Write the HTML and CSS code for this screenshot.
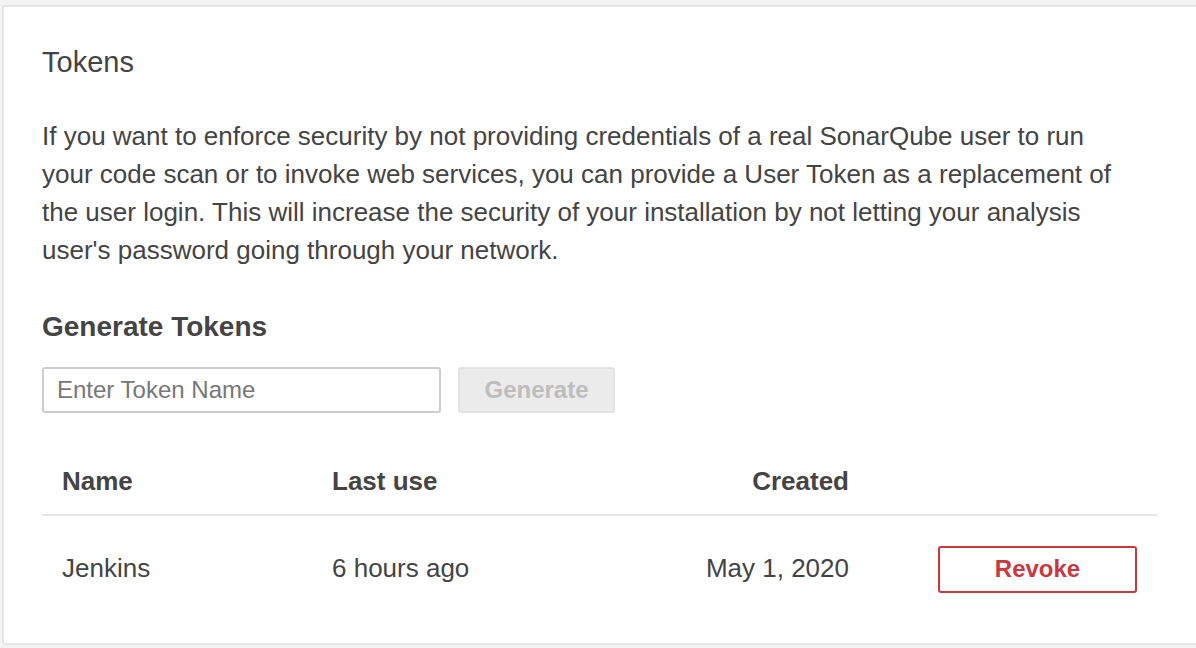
FILE: index.html
```html
<!DOCTYPE html>
<html lang="en">
<head>
<meta charset="utf-8">
<title>Tokens</title>
<link rel="stylesheet" href="styles.css">
</head>
<body>
<div class="card">
  <h2 class="title">Tokens</h2>
  <p class="intro">If you want to enforce security by not providing credentials of a real SonarQube user to run your code scan or to invoke web services, you can provide a User Token as a replacement of the user login. This will increase the security of your installation by not letting your analysis user's password going through your network.</p>
  <h3 class="subtitle">Generate Tokens</h3>
  <form class="gen-form">
    <input class="token-input" type="text" placeholder="Enter Token Name">
    <button class="btn-generate" type="button" disabled>Generate</button>
  </form>
  <table class="tokens">
    <colgroup>
      <col class="c-name">
      <col class="c-last">
      <col class="c-created">
      <col class="c-action">
    </colgroup>
    <thead>
      <tr>
        <th>Name</th>
        <th>Last use</th>
        <th class="right">Created</th>
        <th></th>
      </tr>
    </thead>
    <tbody>
      <tr>
        <td>Jenkins</td>
        <td>6 hours ago</td>
        <td class="right">May 1, 2020</td>
        <td class="right"><button class="btn-revoke" type="button">Revoke</button></td>
      </tr>
    </tbody>
  </table>
</div>
</body>
</html>
```
FILE: styles.css
```css
html {
  background: #f3f3f3;
  overflow: hidden;
}
body {
  margin: 0;
  font-family: "Liberation Sans", Arial, sans-serif;
  color: #444;
}
.card {
  margin: 5px 0 0 2px;
  width: 1240px;
  box-sizing: border-box;
  background: #fff;
  border: 2px solid #e6e6e6;
  border-radius: 3px;
  padding: 37px 0 22px 38px;
}
.title {
  margin: 0;
  font-size: 29px;
  font-weight: normal;
  line-height: 36px;
}
.intro {
  margin: 37px 0 0;
  width: 1086px;
  font-size: 26px;
  line-height: 38px;
}
.subtitle {
  margin: 41px 0 0;
  font-size: 28px;
  font-weight: bold;
  line-height: 34px;
}
.gen-form {
  margin: 23px 0 0;
  display: flex;
  gap: 17px;
}
.token-input {
  width: 399px;
  height: 46px;
  box-sizing: border-box;
  border: 2px solid #cdcdcd;
  border-radius: 3px;
  padding: 0 13px;
  font-family: inherit;
  font-size: 24px;
  color: #444;
}
.token-input::placeholder {
  color: #777;
}
.btn-generate {
  width: 157px;
  height: 46px;
  box-sizing: border-box;
  border: 2px solid #e3e3e3;
  border-radius: 3px;
  background: #ebebeb;
  color: #bdbdbd;
  font-family: inherit;
  font-size: 24px;
  font-weight: bold;
}
.tokens {
  margin-top: 33px;
  width: 1115px;
  border-collapse: collapse;
  table-layout: fixed;
  font-size: 26px;
}
.c-name { width: 270px; }
.c-last { width: 270px; }
.c-created { width: 287px; }
.c-action { width: 288px; }
.tokens th {
  text-align: left;
  font-weight: bold;
  line-height: 30px;
  padding: 20px 20px 18px;
  border-bottom: 2px solid #e6e6e6;
}
.tokens td {
  line-height: 47px;
  padding: 28px 20px;
  vertical-align: middle;
}
.tokens .right {
  text-align: right;
}
.btn-revoke {
  width: 199px;
  height: 47px;
  box-sizing: border-box;
  border: 2px solid #c7393f;
  border-radius: 3px;
  background: #fff;
  color: #c7393f;
  font-family: inherit;
  font-size: 24px;
  font-weight: bold;
  vertical-align: middle;
}
```
